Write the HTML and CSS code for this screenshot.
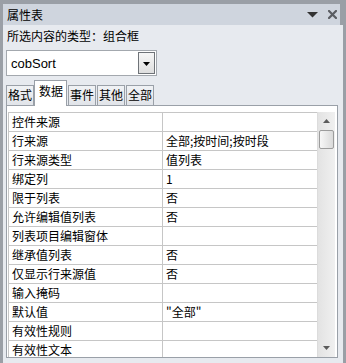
FILE: index.html
```html
<!DOCTYPE html>
<html lang="zh-CN">
<head>
<meta charset="utf-8">
<title>属性表</title>
<link rel="stylesheet" href="styles.css">
</head>
<body>
<div class="window">
  <div class="titlebar">
    <span class="title">属性表</span>
    <span class="tb-icons">
      <svg class="tb-menu" width="11" height="6" viewBox="0 0 11 6"><polygon points="0,0 11,0 5.5,5.5" fill="#333"/></svg>
      <svg class="tb-close" width="9" height="9" viewBox="0 0 9 9"><path d="M1 1 L8 8 M8 1 L1 8" stroke="#5a5d62" stroke-width="2.2" stroke-linecap="square"/></svg>
    </span>
  </div>
  <div class="body">
    <div class="seltype">所选内容的类型：组合框</div>
    <div class="combo">
      <span class="combo-text">cobSort</span>
      <span class="combo-btn"><svg width="7" height="4" viewBox="0 0 7 4"><polygon points="0,0 7,0 3.5,4" fill="#000"/></svg></span>
    </div>
    <div class="tabs">
      <div class="tab">格式</div>
      <div class="tab active">数据</div>
      <div class="tab">事件</div>
      <div class="tab">其他</div>
      <div class="tab">全部</div>
    </div>
    <div class="panel">
      <div class="grid-wrap">
        <div class="grid">
          <div class="cell label">控件来源</div><div class="cell value"></div>
          <div class="cell label">行来源</div><div class="cell value">全部;按时间;按时段</div>
          <div class="cell label">行来源类型</div><div class="cell value">值列表</div>
          <div class="cell label">绑定列</div><div class="cell value">1</div>
          <div class="cell label">限于列表</div><div class="cell value">否</div>
          <div class="cell label">允许编辑值列表</div><div class="cell value">否</div>
          <div class="cell label">列表项目编辑窗体</div><div class="cell value"></div>
          <div class="cell label">继承值列表</div><div class="cell value">否</div>
          <div class="cell label">仅显示行来源值</div><div class="cell value">否</div>
          <div class="cell label">输入掩码</div><div class="cell value"></div>
          <div class="cell label">默认值</div><div class="cell value">"全部"</div>
          <div class="cell label">有效性规则</div><div class="cell value"></div>
          <div class="cell label">有效性文本</div><div class="cell value"></div>
        </div>
        <div class="scrollbar">
          <div class="sb-arrow"><svg width="7" height="4" viewBox="0 0 7 4"><polygon points="3.5,0 7,4 0,4" fill="#5b5b5b"/></svg></div>
          <div class="sb-thumb"></div>
          <div class="sb-track"></div>
          <div class="sb-arrow"><svg width="7" height="4" viewBox="0 0 7 4"><polygon points="0,0 7,0 3.5,4" fill="#5b5b5b"/></svg></div>
        </div>
      </div>
    </div>
  </div>
</div>
</body>
</html>
```

FILE: styles.css
```css
* { box-sizing: border-box; }
html, body { margin: 0; padding: 0; }
body {
  background: #e7eaef;
  font-family: "Noto Sans CJK SC", "Noto Sans", sans-serif;
  font-size: 12px;
  color: #000;
}
.window {
  width: 346px;
  height: 363px;
  overflow: hidden;
  background: #e7eaef;
  border-top: 4px solid #9a9fa6;
  border-left: 3px solid #9a9fa6;
  border-right: 3px solid #9a9fa6;
}
.titlebar {
  height: 21px;
  background: #cfd5de;
  border-right: 3px solid #9a9fa6;
  display: flex;
  align-items: center;
  justify-content: space-between;
  padding-left: 4px;
  padding-right: 3px;
}
.title { line-height: 21px; }
.tb-icons {
  display: flex;
  align-items: center;
  gap: 10px;
}
.tb-menu { display: block; margin-top: 1px; }
.tb-close { display: block; }
.body {
  padding: 0 5px 0 3px;
}
.seltype {
  height: 21px;
  line-height: 21px;
  padding-left: 1px;
}
.combo {
  margin-top: 4px;
  width: 151px;
  height: 26px;
  background: #fff;
  border: 1px solid #a3a8ae;
  display: flex;
  align-items: center;
  justify-content: space-between;
  padding: 0 1px 0 4px;
}
.combo-text {
  font-family: "Liberation Sans", Arial, sans-serif;
  font-size: 13px;
}
.combo-btn {
  width: 17px;
  height: 22px;
  border: 1px solid #6f7378;
  background: linear-gradient(#f6f6f6, #dedede);
  display: flex;
  align-items: center;
  justify-content: center;
}
.combo-btn svg { display: block; margin-top: 1px; }
.tabs {
  margin-top: 4px;
  height: 25px;
  display: flex;
  align-items: flex-end;
  position: relative;
  z-index: 1;
}
.tab {
  height: 20px;
  line-height: 18px;
  padding: 0 1px;
  border: 1px solid #9aa0a8;
  border-bottom: none;
  background: linear-gradient(#f0f2f5, #e1e4e9);
  margin-left: 1px;
}
.tab:first-child { margin-left: 0; }
.tab.active {
  height: 26px;
  line-height: 20px;
  padding: 0 3px 4px 4px;
  background: #fff;
  margin-left: 0;
  margin-bottom: -1px;
}
.tab.active + .tab { margin-left: 1px; }
.panel {
  width: 332px;
  height: 253px;
  background: #fff;
  border: 1px solid #9aa0a8;
  padding: 6px 1px 0 1px;
}
.grid-wrap {
  display: flex;
  height: 245px;
  overflow: hidden;
}
.grid {
  flex: 1;
  display: grid;
  grid-template-columns: 154px 1fr;
  grid-auto-rows: 19px;
  border-top: 1px solid #c6c6c6;
  border-left: 1px solid #c6c6c6;
  overflow: hidden;
}
.cell {
  border-bottom: 1px solid #c6c6c6;
  line-height: 18px;
  padding-left: 3px;
  white-space: nowrap;
  overflow: hidden;
}
.cell.label { border-right: 1px solid #c6c6c6; }
.scrollbar {
  width: 18px;
  display: flex;
  flex-direction: column;
  align-items: center;
  background: linear-gradient(90deg, #e3e3e3, #f0f0f0);
  border-left: 1px solid #dcdcdc;
  margin-right: 1px;
}
.sb-arrow {
  height: 18px;
  display: flex;
  align-items: center;
  justify-content: center;
}
.sb-arrow svg { display: block; }
.sb-thumb {
  width: 15px;
  height: 19px;
  border: 1px solid #9c9c9c;
  border-radius: 2px;
  background: linear-gradient(90deg, #f7f7f7, #dadada);
}
.sb-track { flex: 1; }
```
